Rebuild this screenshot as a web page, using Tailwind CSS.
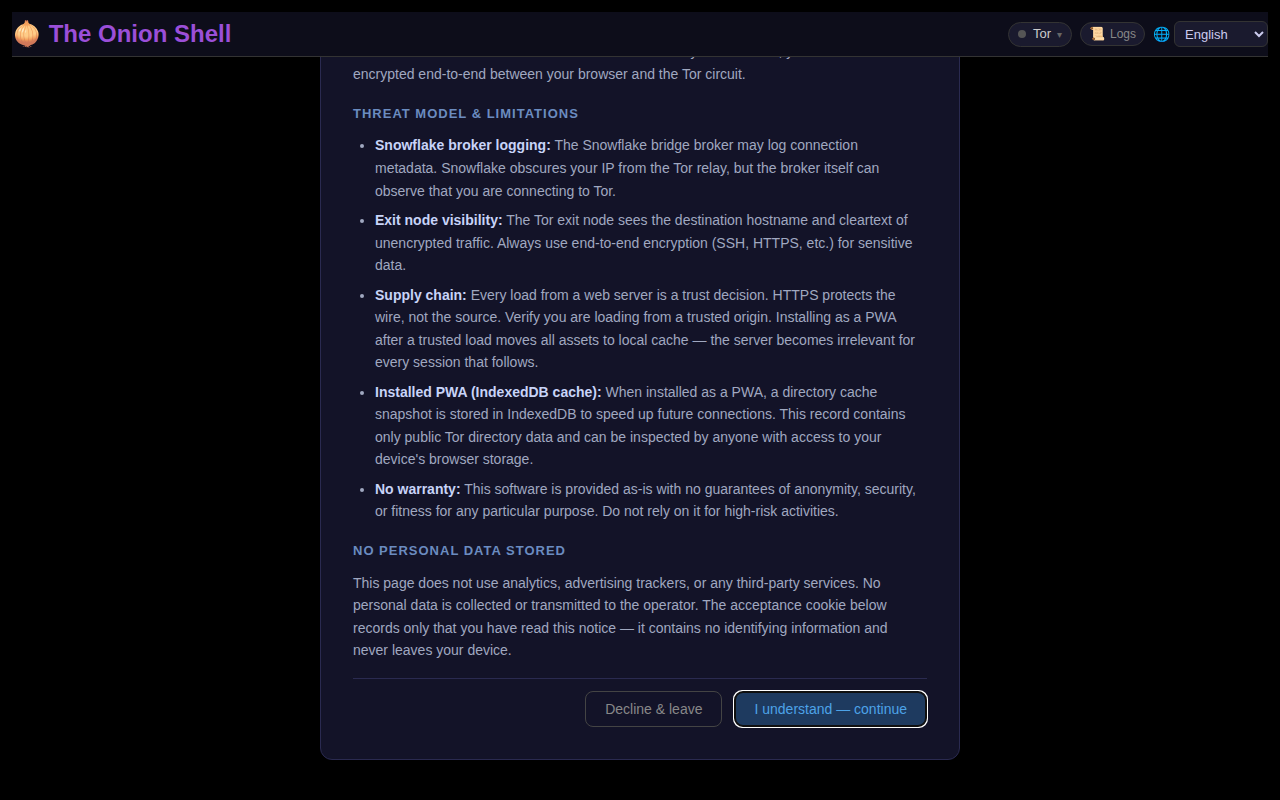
<!DOCTYPE html>
<html lang="en">
<head>
    <meta charset="UTF-8">
    <meta name="viewport" content="width=device-width, initial-scale=1.0">
    <script src="https://cdn.jsdelivr.net/npm/@tailwindcss/browser@4"></script>
    <title>The Onion Shell</title>
</head>
<body class="bg-black font-['Liberation_Sans',Arial,sans-serif]">
    <div class="h-screen flex flex-col px-3 pt-3 overflow-hidden">
        <header class="flex shrink-0 items-center justify-between h-[45px] bg-[#0d0d1a] border-b border-[#333]">
            <h1 class="text-2xl font-bold text-[#9b4fd8]">🧅 The Onion Shell</h1>
            <div class="flex items-center gap-2">
                <button type="button" class="flex items-center h-[25px] px-[9px] rounded-full border border-[#333] bg-[#1a1a2e] text-[13px] text-[#ccc]">
                    <span class="size-2 mr-[7px] rounded-full bg-[#555]"></span>
                    Tor
                    <span class="ml-[6px] text-[10px] text-[#666]">▾</span>
                </button>
                <button type="button" class="flex items-center gap-[5px] h-6 px-2 rounded-full border border-[#333] bg-[#1a1a2e] text-xs text-[#888]">
                    <span class="text-[13px]">📜</span>
                    Logs
                </button>
                <div class="flex items-center gap-1">
                    <label for="language" class="text-sm">🌐</label>
                    <select id="language" class="w-[94px] h-[26px] px-[6px] rounded-md border border-[#333] bg-[#1a1a2e] text-[13px] text-[#ccccee]">
                        <option>English</option>
                    </select>
                </div>
            </div>
        </header>

        <main class="flex-1 min-h-0 flex flex-col items-center justify-end pb-10 overflow-hidden">
            <div class="shrink-0 w-full max-w-[640px] p-8 rounded-xl border border-[#2a2a50] bg-[#131328] text-sm leading-[1.61] text-[#a0a8c0]">
                <p>
                    Because the whole Tor client is loaded and runs directly from this tab, your traffic is
                    encrypted end-to-end between your browser and the Tor circuit.
                </p>

                <h2 class="mt-[18px] mb-[10px] text-[13px] font-bold uppercase tracking-[1px] text-[#6b8cc0]">Threat model &amp; limitations</h2>
                <ul class="list-disc pl-[22px] pr-1 space-y-[7px]">
                    <li>
                        <strong class="text-[#c8d4f8]">Snowflake broker logging:</strong>
                        The Snowflake bridge broker may log connection metadata. Snowflake obscures your IP
                        from the Tor relay, but the broker itself can observe that you are connecting to Tor.
                    </li>
                    <li>
                        <strong class="text-[#c8d4f8]">Exit node visibility:</strong>
                        The Tor exit node sees the destination hostname and cleartext of unencrypted traffic.
                        Always use end-to-end encryption (SSH, HTTPS, etc.) for sensitive data.
                    </li>
                    <li>
                        <strong class="text-[#c8d4f8]">Supply chain:</strong>
                        Every load from a web server is a trust decision. HTTPS protects the wire, not the
                        source. Verify you are loading from a trusted origin. Installing as a PWA after a
                        trusted load moves all assets to local cache — the server becomes irrelevant for
                        every session that follows.
                    </li>
                    <li>
                        <strong class="text-[#c8d4f8]">Installed PWA (IndexedDB cache):</strong>
                        When installed as a PWA, a directory cache snapshot is stored in IndexedDB to speed up
                        future connections. This record contains only public Tor directory data and can be
                        inspected by anyone with access to your device's browser storage.
                    </li>
                    <li>
                        <strong class="text-[#c8d4f8]">No warranty:</strong>
                        This software is provided as-is with no guarantees of anonymity, security, or fitness
                        for any particular purpose. Do not rely on it for high-risk activities.
                    </li>
                </ul>

                <h2 class="mt-[18px] mb-[10px] text-[13px] font-bold uppercase tracking-[1px] text-[#6b8cc0]">No personal data stored</h2>
                <p class="pr-1">
                    This page does not use analytics, advertising trackers, or any third-party services. No
                    personal data is collected or transmitted to the operator. The acceptance cookie below
                    records only that you have read this notice — it contains no identifying information and
                    never leaves your device.
                </p>

                <div class="flex justify-end gap-3 mt-4 pt-3 border-t border-[#2a2a50]">
                    <button type="button" class="h-9 px-[19px] rounded-lg border border-[#444] text-[#888]">Decline &amp; leave</button>
                    <button type="button" autofocus class="h-9 px-[19px] rounded-lg border border-[#2a5a8a] bg-[#1e3a5f] text-[#4da3e8]">I understand — continue</button>
                </div>
            </div>
        </main>
    </div>
</body>
</html>
